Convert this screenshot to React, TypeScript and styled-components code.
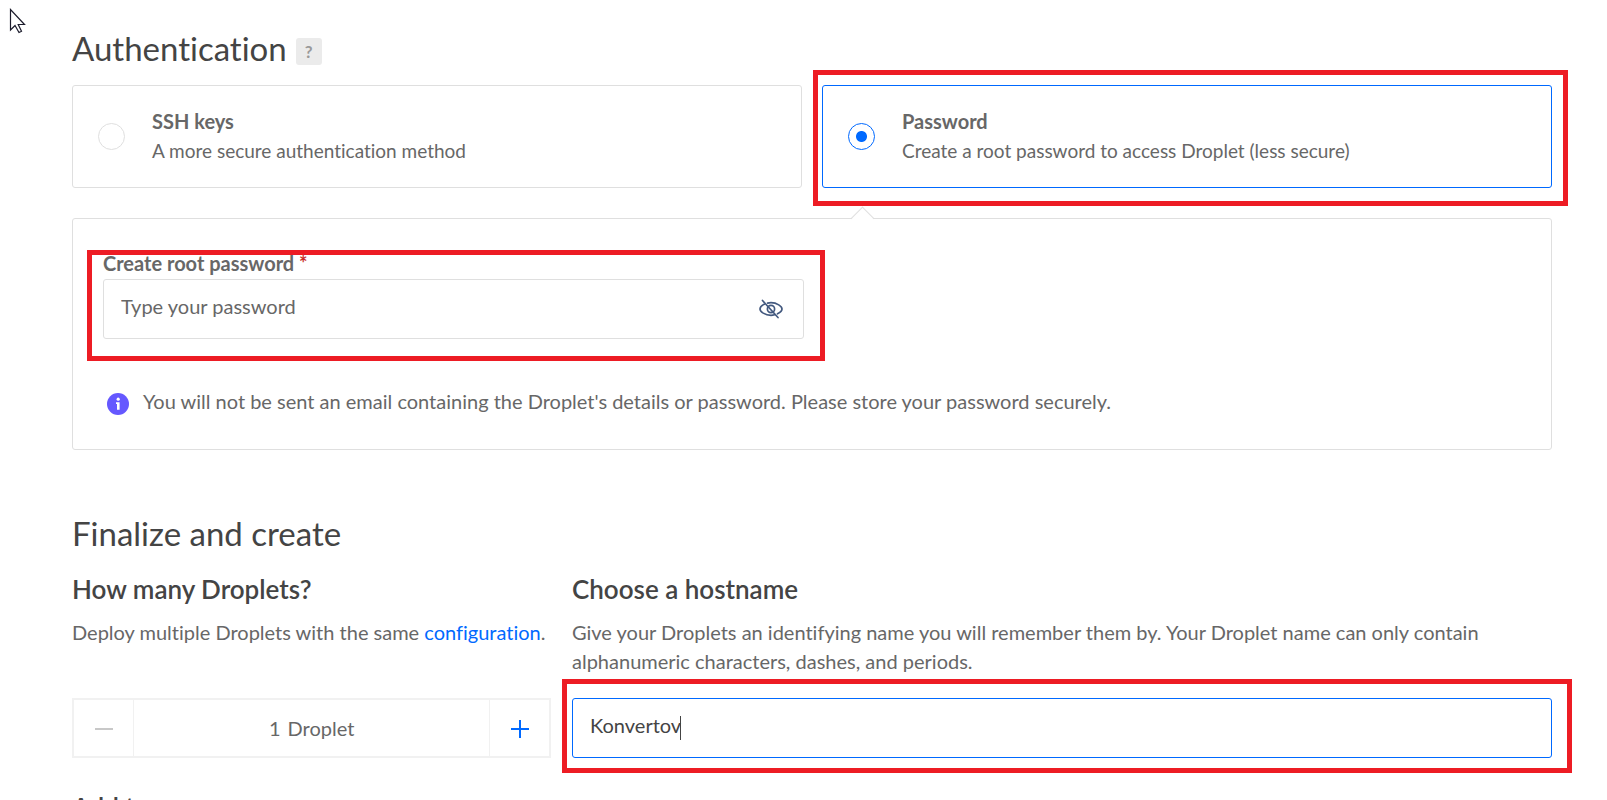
import React, { useState } from "react";
import styled, { createGlobalStyle } from "styled-components";

const color = {
  heading: "#444",
  text: "#676767",
  line: "#dfdfdf",
  faint: "#f1f1f1",
  blue: "#0069ff",
  mark: "#ed1c24",
};

const GlobalStyle = createGlobalStyle`
  * { box-sizing: border-box; }
  body {
    margin: 0;
    background: #fff;
    color: ${color.text};
    font: 400 20px/29px Lato, "Open Sans", sans-serif;
    font-variant-ligatures: none;
  }
  h1, h2, h3, p { margin: 0; }
  input, button { font: inherit; color: inherit; }
`;

const Page = styled.main`
  position: relative;
  height: 100vh;
  overflow: hidden;
  padding: 28px 55px 0 72px;
`;

const SectionTitle = styled.h2`
  font-size: 33px;
  line-height: 40px;
  font-weight: 400;
  color: ${color.heading};
`;

const SectionHead = styled.div`
  display: flex;
  align-items: center;
  gap: 9px;
  margin-bottom: 17px;
`;

const HelpButton = styled.button`
  width: 26px;
  height: 27px;
  margin-top: 7px;
  padding: 0;
  border: 0;
  border-radius: 3px;
  background: #ebebeb;
  color: #999;
  font-size: 17px;
  font-weight: 700;
  line-height: 27px;
`;

const Options = styled.div`
  display: grid;
  grid-template-columns: 1fr 1fr;
  gap: 20px;
`;

const OptionCard = styled.label<{ $selected: boolean }>`
  position: relative;
  display: flex;
  align-items: center;
  gap: 27px;
  padding: 21px 25px 22px;
  border: 1px solid ${(p) => (p.$selected ? color.blue : color.line)};
  border-radius: 3px;
`;

const Radio = styled.input`
  appearance: none;
  flex: none;
  width: 27px;
  height: 27px;
  margin: 0;
  border: 1px solid ${color.line};
  border-radius: 50%;
  &:checked {
    border-color: ${color.blue};
    background: radial-gradient(circle, ${color.blue} 5px, transparent 6px);
  }
`;

const OptionText = styled.span`
  display: flex;
  flex-direction: column;
`;

const OptionName = styled.strong`
  font-weight: 700;
`;

const OptionNote = styled.span`
  font-size: 19px;
`;

const Highlight = styled.span<{ $inset: string }>`
  position: absolute;
  inset: ${(p) => p.$inset};
  border: 5px solid ${color.mark};
  pointer-events: none;
`;

const Panel = styled.section`
  position: relative;
  margin: 30px 0 63px;
  padding: 30px 30px 33px;
  border: 1px solid ${color.line};
  border-radius: 3px;
  &::before {
    content: "";
    position: absolute;
    top: -9px;
    left: calc(50% + 42px);
    width: 16px;
    height: 16px;
    border: solid ${color.line};
    border-width: 1px 0 0 1px;
    background: linear-gradient(135deg, #fff 50%, transparent 50%);
    transform: rotate(45deg);
  }
`;

const PanelColumns = styled.div`
  display: grid;
  grid-template-columns: 1fr 1fr;
  gap: 16px;
`;

const Field = styled.div`
  position: relative;
`;

const FieldLabel = styled.label`
  display: block;
  margin-bottom: 1px;
  font-weight: 700;
`;

const Required = styled.span`
  color: #c9302c;
`;

const TextBox = styled.input<{ $active?: boolean }>`
  display: block;
  width: 100%;
  height: 60px;
  padding: 0 60px 6px 17px;
  border: 1px solid ${(p) => (p.$active ? color.blue : color.line)};
  border-radius: 3px;
  outline: 0;
  background: #fff;
  color: ${color.heading};
  caret-color: transparent;
  &::placeholder {
    color: ${color.text};
    opacity: 1;
  }
`;

const InputWrap = styled.div`
  position: relative;
`;

const RevealButton = styled.button`
  position: absolute;
  top: 18px;
  right: 20px;
  padding: 0;
  border: 0;
  background: none;
  line-height: 0;
`;

const Caret = styled.span`
  position: absolute;
  top: 18px;
  left: 108px;
  width: 1px;
  height: 24px;
  background: ${color.heading};
`;

const Notice = styled.p`
  display: flex;
  align-items: center;
  gap: 14px;
  margin-top: 48px;
  padding-left: 4px;
`;

const InfoIcon = styled.svg`
  flex: none;
  margin-top: 5px;
`;

const FinalGrid = styled.div`
  display: grid;
  grid-template-columns: repeat(12, 1fr);
  gap: 20px;
  margin: 19px 0 32px;
`;

const Column = styled.div<{ $span: number }>`
  grid-column: span ${(p) => p.$span};
  display: flex;
  flex-direction: column;
  justify-content: space-between;
  gap: 22px;
`;

const Intro = styled.div`
  display: flex;
  flex-direction: column;
  gap: 12px;
`;

const SubTitle = styled.h3`
  font-size: 26px;
  line-height: 34px;
  font-weight: 600;
  color: ${color.heading};
`;

const Link = styled.a`
  color: ${color.blue};
  text-decoration: none;
`;

const Stepper = styled.div`
  display: grid;
  grid-template-columns: 59px 1fr 59px;
  height: 60px;
  margin-right: 1px;
  border: 2px solid ${color.faint};
`;

const StepButton = styled.button`
  display: flex;
  align-items: center;
  justify-content: center;
  padding: 2px 0 0;
  border: 0;
  background: none;
  color: ${color.blue};
  &:disabled {
    color: #c8c8c8;
  }
`;

const Count = styled.div`
  display: flex;
  align-items: center;
  justify-content: center;
  gap: 7px;
  border: solid ${color.faint};
  border-width: 0 1px;
`;

const CountInput = styled.input`
  width: 12px;
  padding: 0;
  border: 0;
  outline: 0;
  background: none;
  text-align: right;
`;

const Pointer = styled.svg`
  position: absolute;
  top: 8px;
  left: 9px;
`;

export default function App() {
  const [method, setMethod] = useState("password");
  const [count, setCount] = useState(1);
  const [host, setHost] = useState("Konvertov");

  return (
    <Page>
      <GlobalStyle />
      <SectionHead>
        <SectionTitle>Authentication</SectionTitle>
        <HelpButton type="button">?</HelpButton>
      </SectionHead>

      <Options>
        <OptionCard $selected={method === "ssh"}>
          <Radio type="radio" name="method" checked={method === "ssh"} onChange={() => setMethod("ssh")} />
          <OptionText>
            <OptionName>SSH keys</OptionName>
            <OptionNote>A more secure authentication method</OptionNote>
          </OptionText>
        </OptionCard>
        <OptionCard $selected={method === "password"}>
          <Radio type="radio" name="method" checked={method === "password"} onChange={() => setMethod("password")} />
          <OptionText>
            <OptionName>Password</OptionName>
            <OptionNote>Create a root password to access Droplet (less secure)</OptionNote>
          </OptionText>
          <Highlight $inset="-16px -17px -19px -10px" />
        </OptionCard>
      </Options>

      <Panel>
        <PanelColumns>
          <Field>
            <FieldLabel htmlFor="root-password">
              Create root password <Required>*</Required>
            </FieldLabel>
            <InputWrap>
              <TextBox id="root-password" type="password" placeholder="Type your password" />
              <RevealButton type="button" aria-label="Show password">
                <svg width="26" height="24" viewBox="0 0 26 24" fill="none" stroke="#43597f" strokeWidth="1.7" strokeLinecap="round">
                  <path d="M6.2 7.3C3.6 8.6 2 10.7 2 12c0 2.600 5 6.300 11 6.300 1.300 0 2.500-.2 3.600-.5" />
                  <path d="M9.600 6.100C10.700 5.800 11.800 5.700 13 5.700c6 0 11 3.700 11 6.300 0 1.500-1.700 3.500-4.500 4.800" />
                  <circle cx="13" cy="12" r="3.600" />
                  <path d="M4.500 3.500 20 20.500" />
                </svg>
              </RevealButton>
            </InputWrap>
            <Highlight $inset="1px -21px -22px -16px" />
          </Field>
        </PanelColumns>
        <Notice>
          <InfoIcon width="22" height="22" viewBox="0 0 22 22" aria-hidden="true">
            <circle cx="11" cy="11" r="11" fill="#6558ff" />
            <circle cx="11.200" cy="6.200" r="1.600" fill="#fff" />
            <path d="M9 9.200h3.600v7.600h-2.600v-5.800h-1z" fill="#fff" />
          </InfoIcon>
          You will not be sent an email containing the Droplet's details or password. Please store your password securely.
        </Notice>
      </Panel>

      <SectionTitle>Finalize and create</SectionTitle>
      <FinalGrid>
        <Column $span={4}>
          <Intro>
            <SubTitle>How many Droplets?</SubTitle>
            <p>
              Deploy multiple Droplets with the same <Link href="#configuration">configuration</Link>.
            </p>
          </Intro>
          <Stepper>
            <StepButton type="button" aria-label="Remove a Droplet" disabled={count === 1} onClick={() => setCount(count - 1)}>
              <svg width="18" height="18" viewBox="0 0 18 18" stroke="currentColor" strokeWidth="2">
                <path d="M0 9h18" />
              </svg>
            </StepButton>
            <Count>
              <CountInput id="count" value={count} onChange={(e) => setCount(Number(e.target.value) || 1)} />
              <label htmlFor="count">Droplet</label>
            </Count>
            <StepButton type="button" aria-label="Add a Droplet" onClick={() => setCount(count + 1)}>
              <svg width="18" height="18" viewBox="0 0 18 18" stroke="currentColor" strokeWidth="2">
                <path d="M0 9h18M9 0v18" />
              </svg>
            </StepButton>
          </Stepper>
        </Column>
        <Column $span={8}>
          <Intro>
            <SubTitle id="host-title">Choose a hostname</SubTitle>
            <p>
              Give your Droplets an identifying name you will remember them by. Your Droplet name can only contain
              alphanumeric characters, dashes, and periods.
            </p>
          </Intro>
          <InputWrap>
            <TextBox $active aria-labelledby="host-title" value={host} onChange={(e) => setHost(e.target.value)} />
            <Caret />
            <Highlight $inset="-19px -20px -15px -10px" />
          </InputWrap>
        </Column>
      </FinalGrid>
      <SubTitle>Add tags</SubTitle>

      <Pointer width="18" height="26" viewBox="0 0 18 26" aria-hidden="true">
        <path d="M1.500 1.500v20.500l4.500-4.500 4 7 2.500-1.200-3.300-6.800h6.300z" fill="#fff" stroke="#1c1c2c" strokeWidth="1.200" />
      </Pointer>
    </Page>
  );
}
